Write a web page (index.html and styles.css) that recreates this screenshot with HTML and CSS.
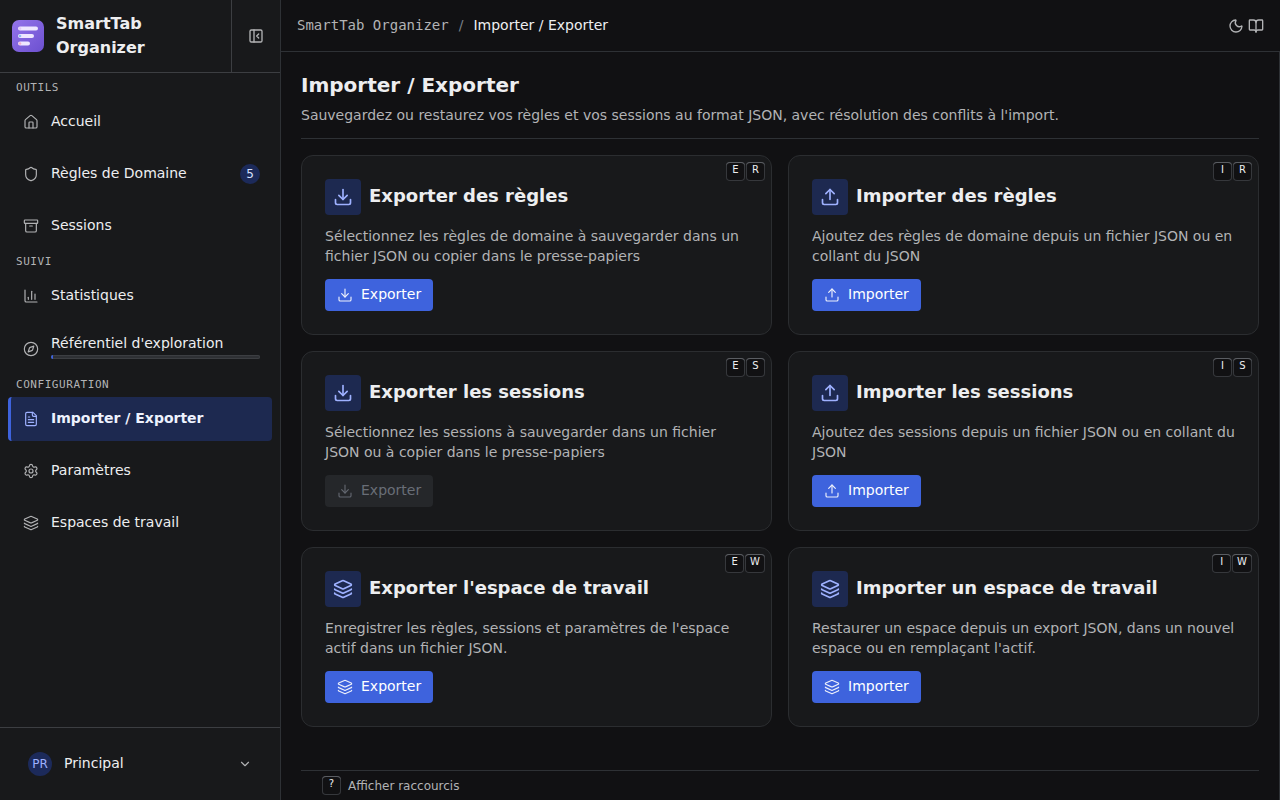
FILE: index.html
```html
<!DOCTYPE html>
<html lang="fr">
<head>
<meta charset="utf-8">
<title>SmartTab Organizer</title>
<link rel="stylesheet" href="styles.css">
</head>
<body>

<!-- icons -->
<svg class="sprite" aria-hidden="true">
  <symbol id="i-panel" viewBox="0 0 24 24"><rect width="18" height="18" x="3" y="3" rx="2"/><path d="M9 3v18"/><path d="m16 15-3-3 3-3"/></symbol>
  <symbol id="i-home" viewBox="0 0 24 24"><path d="M15 21v-8a1 1 0 0 0-1-1h-4a1 1 0 0 0-1 1v8"/><path d="M3 10a2 2 0 0 1 .709-1.528l7-6a2 2 0 0 1 2.582 0l7 6A2 2 0 0 1 21 10v9a2 2 0 0 1-2 2H5a2 2 0 0 1-2-2z"/></symbol>
  <symbol id="i-shield" viewBox="0 0 24 24"><path d="M20 13c0 5-3.5 7.5-7.66 8.95a1 1 0 0 1-.67-.01C7.5 20.5 4 18 4 13V6a1 1 0 0 1 1-1c2 0 4.5-1.2 6.24-2.72a1.17 1.17 0 0 1 1.52 0C14.51 3.81 17 5 19 5a1 1 0 0 1 1 1z"/></symbol>
  <symbol id="i-archive" viewBox="0 0 24 24"><rect width="20" height="5" x="2" y="3" rx="1"/><path d="M4 8v11a2 2 0 0 0 2 2h12a2 2 0 0 0 2-2V8"/><path d="M10 12h4"/></symbol>
  <symbol id="i-chart" viewBox="0 0 24 24"><path d="M3 3v16a2 2 0 0 0 2 2h16"/><path d="M18 17V9"/><path d="M13 17V5"/><path d="M8 17v-3"/></symbol>
  <symbol id="i-compass" viewBox="0 0 24 24"><circle cx="12" cy="12" r="10"/><path d="m16.24 7.76-1.804 5.411a2 2 0 0 1-1.265 1.265L7.76 16.24l1.804-5.411a2 2 0 0 1 1.265-1.265z"/></symbol>
  <symbol id="i-file" viewBox="0 0 24 24"><path d="M15 2H6a2 2 0 0 0-2 2v16a2 2 0 0 0 2 2h12a2 2 0 0 0 2-2V7Z"/><path d="M14 2v4a2 2 0 0 0 2 2h4"/><path d="M10 9H8"/><path d="M16 13H8"/><path d="M16 17H8"/></symbol>
  <symbol id="i-settings" viewBox="0 0 24 24"><path d="M9.671 4.136a2.34 2.34 0 0 1 4.659 0 2.34 2.34 0 0 0 3.319 1.915 2.34 2.34 0 0 1 2.33 4.033 2.34 2.34 0 0 0 0 3.831 2.34 2.34 0 0 1-2.33 4.033 2.34 2.34 0 0 0-3.319 1.915 2.34 2.34 0 0 1-4.659 0 2.34 2.34 0 0 0-3.32-1.915 2.34 2.34 0 0 1-2.33-4.033 2.34 2.34 0 0 0 0-3.831A2.34 2.34 0 0 1 6.35 6.051a2.34 2.34 0 0 0 3.319-1.915"/><circle cx="12" cy="12" r="3"/></symbol>
  <symbol id="i-layers" viewBox="0 0 24 24"><path d="M12.83 2.18a2 2 0 0 0-1.66 0L2.6 6.08a1 1 0 0 0 0 1.83l8.58 3.91a2 2 0 0 0 1.66 0l8.58-3.9a1 1 0 0 0 0-1.83z"/><path d="M2 12a1 1 0 0 0 .58.91l8.6 3.91a2 2 0 0 0 1.65 0l8.58-3.9A1 1 0 0 0 22 12"/><path d="M2 17a1 1 0 0 0 .58.91l8.6 3.91a2 2 0 0 0 1.65 0l8.58-3.9A1 1 0 0 0 22 17"/></symbol>
  <symbol id="i-down" viewBox="0 0 24 24"><path d="m6 9 6 6 6-6"/></symbol>
  <symbol id="i-moon" viewBox="0 0 24 24"><path d="M20.985 12.486a9 9 0 1 1-9.473-9.472c.405-.022.617.46.402.803a6 6 0 0 0 8.268 8.268c.344-.215.825-.004.803.401"/></symbol>
  <symbol id="i-book" viewBox="0 0 24 24"><path d="M12 7v14"/><path d="M3 18a1 1 0 0 1-1-1V4a1 1 0 0 1 1-1h5a4 4 0 0 1 4 4 4 4 0 0 1 4-4h5a1 1 0 0 1 1 1v13a1 1 0 0 1-1 1h-6a3 3 0 0 0-3 3 3 3 0 0 0-3-3z"/></symbol>
  <symbol id="i-export" viewBox="0 0 24 24"><path d="M12 15V3"/><path d="M21 15v4a2 2 0 0 1-2 2H5a2 2 0 0 1-2-2v-4"/><path d="m7 10 5 5 5-5"/></symbol>
  <symbol id="i-import" viewBox="0 0 24 24"><path d="M12 3v12"/><path d="m17 8-5-5-5 5"/><path d="M21 15v4a2 2 0 0 1-2 2H5a2 2 0 0 1-2-2v-4"/></symbol>
</svg>

<div class="app">
  <aside class="sidebar">
    <div class="brand">
      <div class="brand-name">
        <svg class="logo" viewBox="0 0 32 32" aria-hidden="true">
          <defs><linearGradient id="lg" x1="0" y1="0" x2="1" y2="1"><stop offset="0" stop-color="#9474ea"/><stop offset="1" stop-color="#6c50d0"/></linearGradient></defs>
          <rect width="32" height="32" rx="7" fill="url(#lg)"/>
          <g fill="#eee6ff">
            <rect x="6" y="6.5" width="20" height="4" rx="2"/>
            <rect x="6" y="14" width="16" height="4" rx="2"/>
            <rect x="6" y="21.5" width="12" height="4" rx="2"/>
          </g>
          <circle cx="8" cy="8.5" r="1.3" fill="#e2c8f8"/>
          <circle cx="8" cy="16" r="1.3" fill="#8fc0f2"/>
          <circle cx="8" cy="23.5" r="1.3" fill="#f3b0cc"/>
        </svg>
        <strong>SmartTab Organizer</strong>
      </div>
      <button class="collapse" type="button" aria-label="Réduire"><svg class="icon"><use href="#i-panel"/></svg></button>
    </div>

    <nav class="nav">
      <h2 class="nav-label">Outils</h2>
      <ul>
        <li><a href="#"><svg class="icon"><use href="#i-home"/></svg><span>Accueil</span></a></li>
        <li><a href="#"><svg class="icon"><use href="#i-shield"/></svg><span>Règles de Domaine</span><b class="badge">5</b></a></li>
        <li><a href="#"><svg class="icon"><use href="#i-archive"/></svg><span>Sessions</span></a></li>
      </ul>
      <h2 class="nav-label">Suivi</h2>
      <ul>
        <li><a href="#"><svg class="icon"><use href="#i-chart"/></svg><span>Statistiques</span></a></li>
        <li><a href="#" class="with-bar"><svg class="icon"><use href="#i-compass"/></svg><span>Référentiel d'exploration<i class="bar"><i style="width:1%"></i></i></span></a></li>
      </ul>
      <h2 class="nav-label">Configuration</h2>
      <ul>
        <li><a href="#" class="active"><svg class="icon"><use href="#i-file"/></svg><span>Importer / Exporter</span></a></li>
        <li><a href="#"><svg class="icon"><use href="#i-settings"/></svg><span>Paramètres</span></a></li>
        <li><a href="#"><svg class="icon"><use href="#i-layers"/></svg><span>Espaces de travail</span></a></li>
      </ul>
    </nav>

    <div class="account">
      <button type="button"><span class="avatar">PR</span><span class="account-name">Principal</span><svg class="icon"><use href="#i-down"/></svg></button>
    </div>
  </aside>

  <div class="page">
    <header class="topbar">
      <div class="crumbs"><a href="#">SmartTab Organizer</a><span class="sep">/</span><span>Importer / Exporter</span></div>
      <div class="tools">
        <button type="button" aria-label="Thème"><svg class="icon"><use href="#i-moon"/></svg></button>
        <button type="button" aria-label="Documentation"><svg class="icon"><use href="#i-book"/></svg></button>
      </div>
    </header>

    <main class="content">
      <div class="intro">
        <h1>Importer / Exporter</h1>
        <p>Sauvegardez ou restaurez vos règles et vos sessions au format JSON, avec résolution des conflits à l'import.</p>
      </div>

      <div class="cards">
        <section class="card">
          <div class="keys"><kbd>E</kbd><kbd>R</kbd></div>
          <div class="card-head"><span class="tile"><svg class="icon"><use href="#i-export"/></svg></span><h3>Exporter des règles</h3></div>
          <p>Sélectionnez les règles de domaine à sauvegarder dans un fichier JSON ou copier dans le presse-papiers</p>
          <button class="btn" type="button"><svg class="icon"><use href="#i-export"/></svg><span>Exporter</span></button>
        </section>
        <section class="card">
          <div class="keys"><kbd>I</kbd><kbd>R</kbd></div>
          <div class="card-head"><span class="tile"><svg class="icon"><use href="#i-import"/></svg></span><h3>Importer des règles</h3></div>
          <p>Ajoutez des règles de domaine depuis un fichier JSON ou en collant du JSON</p>
          <button class="btn" type="button"><svg class="icon"><use href="#i-import"/></svg><span>Importer</span></button>
        </section>
        <section class="card">
          <div class="keys"><kbd>E</kbd><kbd>S</kbd></div>
          <div class="card-head"><span class="tile"><svg class="icon"><use href="#i-export"/></svg></span><h3>Exporter les sessions</h3></div>
          <p>Sélectionnez les sessions à sauvegarder dans un fichier JSON ou à copier dans le presse-papiers</p>
          <button class="btn" type="button" disabled><svg class="icon"><use href="#i-export"/></svg><span>Exporter</span></button>
        </section>
        <section class="card">
          <div class="keys"><kbd>I</kbd><kbd>S</kbd></div>
          <div class="card-head"><span class="tile"><svg class="icon"><use href="#i-import"/></svg></span><h3>Importer les sessions</h3></div>
          <p>Ajoutez des sessions depuis un fichier JSON ou en collant du JSON</p>
          <button class="btn" type="button"><svg class="icon"><use href="#i-import"/></svg><span>Importer</span></button>
        </section>
        <section class="card">
          <div class="keys"><kbd>E</kbd><kbd>W</kbd></div>
          <div class="card-head"><span class="tile"><svg class="icon"><use href="#i-layers"/></svg></span><h3>Exporter l'espace de travail</h3></div>
          <p>Enregistrer les règles, sessions et paramètres de l'espace actif dans un fichier JSON.</p>
          <button class="btn" type="button"><svg class="icon"><use href="#i-layers"/></svg><span>Exporter</span></button>
        </section>
        <section class="card">
          <div class="keys"><kbd>I</kbd><kbd>W</kbd></div>
          <div class="card-head"><span class="tile"><svg class="icon"><use href="#i-layers"/></svg></span><h3>Importer un espace de travail</h3></div>
          <p>Restaurer un espace depuis un export JSON, dans un nouvel espace ou en remplaçant l'actif.</p>
          <button class="btn" type="button"><svg class="icon"><use href="#i-layers"/></svg><span>Importer</span></button>
        </section>
      </div>

      <footer class="hints"><kbd>?</kbd><span>Afficher raccourcis</span></footer>
    </main>
  </div>
</div>

</body>
</html>
```

FILE: styles.css
```css
*{box-sizing:border-box;margin:0;padding:0;}
body{background:#111113;color:#edeef0;font:14px/20px "DejaVu Sans",sans-serif;}
ul{list-style:none;}
a{color:inherit;text-decoration:none;}
button{font:inherit;color:inherit;background:none;border:0;cursor:pointer;}
.sprite{display:none;}
.icon{width:16px;height:16px;flex:none;fill:none;stroke:currentColor;stroke-width:2;stroke-linecap:round;stroke-linejoin:round;}
.app{display:flex;height:100vh;}

/* sidebar */
.sidebar{display:flex;flex-direction:column;flex:none;width:281px;background:#18191b;border-right:1px solid #2e3135;}
.brand{display:flex;border-bottom:1px solid #3c3e42;}
.brand-name{display:flex;flex:1;align-items:center;gap:12px;padding:12px;}
.brand-name strong{font-size:16px;line-height:24px;width:120px;}
.logo{width:32px;height:32px;flex:none;}
.collapse{display:flex;align-items:center;justify-content:center;width:49px;border-left:1px solid #3c3e42;color:#b2b3b5;}
.nav{flex:1;padding-top:1px;overflow:auto;}
.nav-label{padding:6px 16px 4px;font:11px/16px "DejaVu Sans Mono",monospace;letter-spacing:.05em;text-transform:uppercase;color:#b2b3b5;}
.nav ul{display:flex;flex-direction:column;gap:8px;padding:0 8px;}
.nav a{display:flex;align-items:center;gap:12px;min-height:44px;padding:0 12px;border-left:3px solid transparent;border-radius:4px;}
.nav a span{flex:1;padding-bottom:2px;}
.nav .icon{color:#b2b3b5;stroke-width:1.75;}
.nav .active{background:#1d2950;border-left-color:#3e63dd;color:#edf2fe;font-weight:700;}
.nav .active .icon{color:#9eb1ff;}
.nav .with-bar{min-height:45px;}
.nav .with-bar span{padding-bottom:5px;}
.badge{width:20px;height:20px;border-radius:50%;background:#1c2a5a;color:#d6e1ff;font-size:12px;font-weight:400;text-align:center;}
.bar{display:block;height:4px;margin-top:2px;border-radius:2px;background:#2e3034;box-shadow:inset 0 0 0 1px #3c3e42;overflow:hidden;}
.bar i{display:block;height:100%;background:#3e63dd;}
.account{padding:12px;border-top:1px solid #3c3e42;}
.account button{display:flex;align-items:center;gap:12px;width:100%;height:48px;padding:0 16px;text-align:left;}
.account-name{flex:1;padding-bottom:2px;}
.account .icon{width:14px;height:14px;color:#b2b3b5;}
.avatar{width:24px;height:24px;border-radius:50%;background:#1c2a5a;color:#9eb1ff;font-size:12px;line-height:24px;text-align:center;}

/* page */
.page{display:flex;flex-direction:column;flex:1;min-width:0;}
.topbar{display:flex;align-items:center;justify-content:space-between;height:52px;padding:0 16px;border-bottom:1px solid #2e3135;}
.crumbs{display:flex;gap:10px;padding-bottom:2px;}
.crumbs a{font-family:"DejaVu Sans Mono",monospace;color:#b2b3b5;}
.crumbs .sep{color:#7b8088;}
.tools{display:flex;gap:4px;color:#b2b3b5;}
.tools button{display:flex;}
.content{display:flex;flex-direction:column;flex:1;padding:19px 20px 0;border-right:1px solid #2e3135;}
.intro{padding-bottom:13px;border-bottom:1px solid #2e3135;margin-bottom:16px;}
.intro h1{font-size:20px;line-height:28px;margin-bottom:6px;}
.intro p,.card p{color:#b2b3b5;}
.cards{display:grid;grid-template-columns:1fr 1fr;gap:16px;}
.card{position:relative;display:flex;flex-direction:column;align-items:flex-start;padding:23px;border:1px solid #2b2d30;border-radius:12px;background:#18191b;}
.card-head{display:flex;align-items:center;gap:8px;}
.card h3{font-size:18px;line-height:26px;padding-bottom:2px;}
.card p{margin:11px 0 13px;}
.tile{display:flex;align-items:center;justify-content:center;width:36px;height:36px;border-radius:4px;background:#1d2950;color:#9eb1ff;}
.tile .icon{width:20px;height:20px;}
.btn{display:flex;align-items:center;gap:8px;height:32px;padding:0 12px;border-radius:4px;background:#3e63dd;color:#fff;}
.btn span{padding-bottom:2px;}
.btn .icon{stroke-width:1.75;opacity:.9;}
.btn:disabled{background:#25272a;color:#696e77;cursor:default;}
.keys{position:absolute;top:6px;right:6px;display:flex;gap:1px;}
kbd{min-width:19px;height:19px;padding:0 5px;border-radius:4px;background:#111113;box-shadow:inset 0 1px 0 #5a5d62,inset 0 0 0 1px #36383c;font:10px/16px "DejaVu Sans",sans-serif;text-align:center;}
.hints{display:flex;align-items:center;gap:7px;height:30px;margin-top:auto;padding:0 21px;border-top:1px solid #2e3135;color:#b2b3b5;font-size:12px;}
.hints kbd{color:#edeef0;}
```
